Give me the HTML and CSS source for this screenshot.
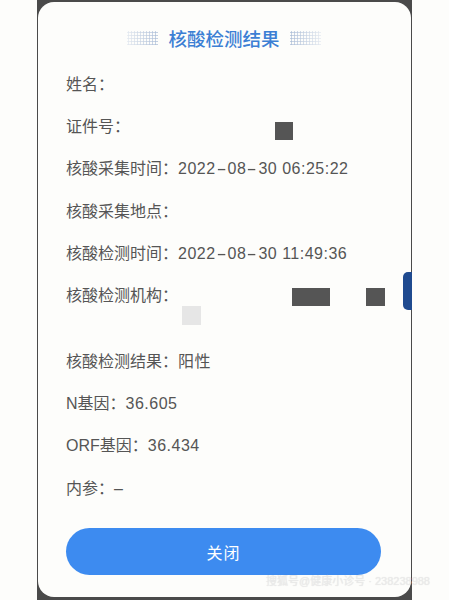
FILE: index.html
```html
<!DOCTYPE html>
<html lang="zh-CN">
<head>
<meta charset="utf-8">
<link rel="stylesheet" href="styles.css">
</head>
<body>
<div class="frame">
  <div class="edge-blue"></div>
  <div class="card">
    <div class="title">
      <span class="dots dots-left"></span>
      <span class="title-text">核酸检测结果</span>
      <span class="dots dots-right"></span>
    </div>
    <div class="rows">
      <div class="row">姓名：</div>
      <div class="row">证件号：<span class="mask mask-id"></span></div>
      <div class="row">核酸采集时间：<span class="val">2022<span class="hy">-</span>08<span class="hy">-</span>30 06:25:22</span></div>
      <div class="row">核酸采集地点：</div>
      <div class="row">核酸检测时间：<span class="val">2022<span class="hy">-</span>08<span class="hy">-</span>30 11:49:36</span></div>
      <div class="row row-org">核酸检测机构：<span class="mask mask-org1"></span><span class="mask mask-org2"></span><span class="mask mask-light"></span></div>
      <div class="row">核酸检测结果：<span class="val">阳性</span></div>
      <div class="row">N基因：<span class="val">36.605</span></div>
      <div class="row">ORF基因：<span class="val">36.434</span></div>
      <div class="row">内参：<span class="val">–</span></div>
    </div>
    <div class="btn-wrap">
      <button class="btn">关闭</button>
    </div>
    <div class="watermark">搜狐号@健康小诊号 · 238238988</div>
  </div>
</div>
</body>
</html>
```
FILE: styles.css
```css
html, body {
  margin: 0;
  padding: 0;
  background: #fdfdfb;
}
body {
  width: 449px;
  height: 600px;
  overflow: hidden;
  font-family: "Liberation Sans", "Noto Sans CJK SC", sans-serif;
}
.frame {
  position: relative;
  margin-left: 37px;
  width: 375px;
  height: 600px;
  background: #4a4a4a;
  box-sizing: border-box;
  padding: 2px 1px 3px 1px;
}
.edge-blue {
  position: absolute;
  right: 0;
  top: 272px;
  width: 9px;
  height: 38px;
  background: #1f4a8f;
  border-radius: 5px 0 0 5px;
  z-index: 2;
}
.card {
  position: relative;
  height: 100%;
  background: #fdfdfb;
  border-radius: 16px;
  box-sizing: border-box;
  padding-top: 22px;
}
.title {
  display: flex;
  justify-content: center;
  align-items: center;
  gap: 10px;
  height: 28px;
  margin-left: -1px;
}
.title-text {
  color: #3c7fd4;
  font-family: "Noto Sans CJK SC", sans-serif;
  font-weight: 500;
  font-size: 18.5px;
  line-height: 28px;
}
.dots {
  width: 31px;
  height: 14px;
  background-image: radial-gradient(circle, #aebfd8 0.9px, transparent 1.3px);
  background-size: 3px 3px;
}
.dots-left {
  -webkit-mask-image: linear-gradient(to right, rgba(0,0,0,0.3), #000);
  mask-image: linear-gradient(to right, rgba(0,0,0,0.3), #000);
}
.dots-right {
  -webkit-mask-image: linear-gradient(to left, rgba(0,0,0,0.3), #000);
  mask-image: linear-gradient(to left, rgba(0,0,0,0.3), #000);
}
.rows {
  padding: 22px 0 0 28px;
}
.row {
  position: relative;
  color: #555;
  font-size: 16px;
  line-height: 22px;
  height: 22px;
  margin-bottom: 20.2px;
  white-space: nowrap;
}
.row-org {
  margin-bottom: 44px;
}
.val {
  color: #555;
  letter-spacing: 0.5px;
}
.hy {
  display: inline-block;
  width: 12px;
  text-align: center;
  transform: scaleX(1.9);
}
.mask {
  position: absolute;
  background: #555;
}
.mask-id {
  left: 209px;
  top: 6px;
  width: 18px;
  height: 18px;
}
.mask-org1 {
  left: 226px;
  top: 3px;
  width: 38px;
  height: 18px;
}
.mask-org2 {
  left: 300px;
  top: 3px;
  width: 19px;
  height: 18px;
}
.mask-light {
  left: 116px;
  top: 21px;
  width: 19px;
  height: 19px;
  background: #e6e6e6;
}
.btn-wrap {
  position: absolute;
  left: 28px;
  right: 30px;
  bottom: 22px;
}
.btn {
  display: block;
  width: 100%;
  height: 47px;
  border: none;
  border-radius: 24px;
  background: #3d8bf0;
  color: #fff;
  font-family: "Noto Sans CJK SC", sans-serif;
  font-size: 16px;
  letter-spacing: 1px;
}
.watermark {
  position: absolute;
  right: -19px;
  bottom: 9px;
  font-size: 11px;
  color: rgba(235,235,235,0.85);
  text-shadow: 0 0 1px rgba(0,0,0,0.12);
  white-space: nowrap;
}
```
